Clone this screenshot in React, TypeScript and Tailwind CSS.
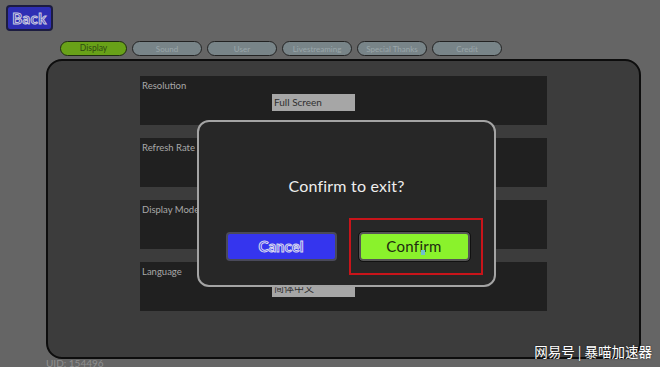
const tabs = ["Sound", "User", "Livestreaming", "Special Thanks", "Credit"];

const rows = [
  { label: "Resolution", value: "Full Screen" },
  { label: "Refresh Rate", value: "" },
  { label: "Display Mode", value: "" },
  { label: "Language", value: "简体中文" },
];

export default function App() {
  return (
    <div className="relative w-[660px] h-[367px] overflow-hidden bg-[#656565] font-['Lato','Noto_Sans_CJK_SC',sans-serif]">
      {/* back */}
      <div className="pt-[5px] pl-[6px]">
        <div className="w-[47px] h-[26px] rounded-[4px] bg-[#2e2eb4] border-2 border-[#1c1c40] flex items-center justify-center">
          <span className="text-[15px] font-bold text-[#2e2eb4] [-webkit-text-stroke:1px_#c8c8e0] tracking-[0.5px]">Back</span>
        </div>
      </div>

      {/* tabs */}
      <div className="flex gap-[5px] pl-[60px] mt-[10px]">
        <div className="w-[67px] h-[15px] rounded-full bg-[#68a118] border-[1.5px] border-[#1d2a10] flex items-center justify-center text-[8.5px] text-[#2f4a12]">
          Display
        </div>
        {tabs.map((t) => (
          <div
            key={t}
            className="w-[70px] h-[15px] rounded-full bg-[#788488] border-[1.5px] border-[#222] flex items-center justify-center text-[8px] text-[#9aa6aa] whitespace-nowrap"
          >
            {t}
          </div>
        ))}
      </div>

      {/* panel */}
      <div className="ml-[46px] mt-[3px] w-[595px] h-[300px] rounded-[16px] bg-[#3c3c3c] border-2 border-[#0d0d0d] pt-[15px] pl-[92px]">
        <div className="flex flex-col gap-[13px]">
          {rows.map((r) => (
            <div key={r.label} className="w-[407px] h-[49px] bg-[#202020] pl-[2px] pt-[4px]">
              <div className="text-[9.5px] text-[#a8a8a8] leading-[12px]">{r.label}</div>
              {r.value && (
                <div className="ml-[130px] mt-[2px] w-[83px] h-[17px] bg-[#a6a6a6] text-[10px] text-[#303030] pl-[2px] leading-[17px]">
                  {r.value}
                </div>
              )}
            </div>
          ))}
        </div>
      </div>

      <div className="absolute left-[46px] top-[356px] text-[10px] text-[#8e8e8e]">UID: 154496</div>

      {/* dialog */}
      <div className="absolute left-[197px] top-[120px] w-[299px] h-[167px] rounded-[12px] bg-[#272727] border-2 border-[#a4a4a4] flex flex-col items-center">
        <div className="mt-[52px] text-[16px] text-[#eeeeee] tracking-[0.2px]">Confirm to exit?</div>
        <div className="mt-[34px] flex gap-[22px] ml-[2px]">
          <div className="w-[111px] h-[29px] rounded-[4px] bg-[#3535ee] border-2 border-[#4a4a5a] flex items-center justify-center">
            <span className="text-[15px] font-bold text-[#3535ee] [-webkit-text-stroke:1px_#d8d8f0]">Cancel</span>
          </div>
          <div className="w-[111px] h-[29px] rounded-[4px] bg-[#8af22c] border-2 border-[#555] outline-1 outline-[#111] flex items-center justify-center">
            <span className="text-[15px] text-[#1e2a10] tracking-[0.3px]">Confirm</span>
          </div>
        </div>
      </div>

      {/* highlight */}
      <div className="absolute left-[349px] top-[218px] w-[134px] h-[57px] border-2 border-[#c8141a]" />
      <div className="absolute left-[421px] top-[250px] w-[4px] h-[5px] bg-[#6fc0d0]" />

      <div className="absolute right-[8px] top-[341px] text-[13.5px] text-white font-['Noto_Sans_CJK_SC',sans-serif] [text-shadow:0_0_2px_rgba(0,0,0,0.6)]">
        网易号 | 暴喵加速器
      </div>
    </div>
  );
}
